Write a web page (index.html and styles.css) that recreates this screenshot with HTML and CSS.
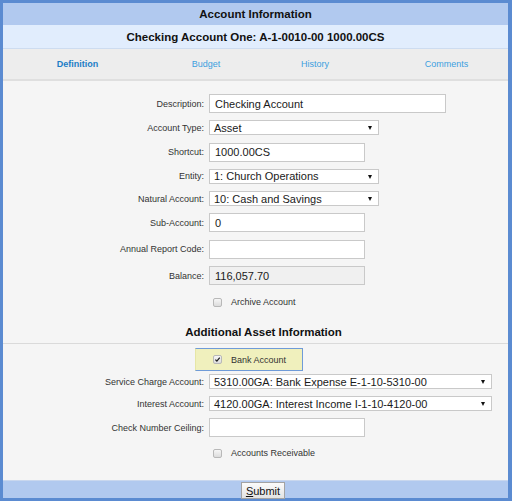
FILE: index.html
```html
<!DOCTYPE html>
<html>
<head>
<meta charset="utf-8">
<title>Account Information</title>
<link rel="stylesheet" href="styles.css">
</head>
<body>
<div class="frame">
  <div class="title">Account Information</div>
  <div class="subtitle">Checking Account One: A-1-0010-00 1000.00CS</div>
  <nav class="tabs">
    <a class="tab tab-1 active">Definition</a>
    <a class="tab tab-2">Budget</a>
    <a class="tab tab-3">History</a>
    <a class="tab tab-4">Comments</a>
  </nav>
  <div class="content">
    <div class="form form-main">
      <label class="lbl">Description:</label>
      <div class="field w-lg">Checking Account</div>

      <label class="lbl">Account Type:</label>
      <div class="select w-md">Asset</div>

      <label class="lbl">Shortcut:</label>
      <div class="field w-sm">1000.00CS</div>

      <label class="lbl">Entity:</label>
      <div class="select w-md">1: Church Operations</div>

      <label class="lbl">Natural Account:</label>
      <div class="select w-md">10: Cash and Savings</div>

      <label class="lbl">Sub-Account:</label>
      <div class="field w-sm">0</div>

      <label class="lbl">Annual Report Code:</label>
      <div class="field w-sm"></div>

      <label class="lbl">Balance:</label>
      <div class="field w-sm readonly">116,057.70</div>

      <div class="check-row check-row-tall">
        <span class="cb"></span><span class="cb-label">Archive Account</span>
      </div>
    </div>

    <h2 class="section-title">Additional Asset Information</h2>

    <div class="bank-box">
      <span class="cb checked"><svg viewBox="0 0 9 9" width="9" height="9"><path d="M1.8 4.6 L3.7 6.6 L7.4 2" fill="none" stroke="#1e1e1e" stroke-width="1.6"/></svg></span><span class="cb-label">Bank Account</span>
    </div>

    <div class="form form-asset">
      <label class="lbl">Service Charge Account:</label>
      <div class="select w-xl">5310.00GA: Bank Expense E-1-10-5310-00</div>

      <label class="lbl">Interest Account:</label>
      <div class="select w-xl">4120.00GA: Interest Income I-1-10-4120-00</div>

      <label class="lbl">Check Number Ceiling:</label>
      <div class="field w-sm"></div>

      <div class="check-row">
        <span class="cb"></span><span class="cb-label">Accounts Receivable</span>
      </div>
    </div>
  </div>
  <div class="footer">
    <button class="submit" type="button"><u>S</u>ubmit</button>
  </div>
</div>
</body>
</html>
```

FILE: styles.css
```css
* { box-sizing: border-box; }
html, body { margin: 0; padding: 0; }
body {
  font-family: "Liberation Sans", Arial, sans-serif;
  background: #ffffff;
}
.frame {
  width: 512px;
  height: 501px;
  border: 3px solid #5b8bd1;
  border-right-width: 4px;
  display: flex;
  flex-direction: column;
  background: #f5f5f5;
}
.title {
  height: 22px;
  flex: none;
  background: #b1c9ef;
  color: #111;
  font-weight: bold;
  font-size: 11.5px;
  display: flex;
  align-items: center;
  justify-content: center;
}
.subtitle {
  height: 24px;
  flex: none;
  background: #e1edfd;
  border-bottom: 1px solid #cddcf0;
  color: #111;
  font-weight: bold;
  font-size: 11.5px;
  display: flex;
  align-items: center;
  justify-content: center;
}
.tabs {
  height: 32px;
  flex: none;
  background: #ededed;
  border-bottom: 2px solid #dfdfdf;
  display: grid;
  grid-template-columns: 149px 108px 110px 1fr;
  align-items: center;
  font-size: 9px;
}
.tab {
  text-align: center;
  color: #3c9fdf;
  cursor: pointer;
}
.tab.active { color: #1b7dc6; font-weight: bold; }
.tab-4 { padding-left: 15px; }

.content {
  flex: 1;
  padding-top: 13px;
}
.form {
  display: grid;
  grid-template-columns: 201px 1fr;
  column-gap: 5px;
  align-items: center;
}
.form-main { row-gap: 7.3px; }
.form-asset { row-gap: 7px; margin-top: 3px; }
.lbl {
  font-size: 9px;
  color: #333;
  text-align: right;
}
.field, .select {
  background: #fff;
  border: 1px solid #c9c9c9;
  font-size: 11px;
  color: #1a1a1a;
  display: flex;
  align-items: center;
  white-space: nowrap;
}
.field { height: 19px; padding-left: 5px; }
.field.readonly { background: #f0f0f0; }
.select {
  height: 15px;
  padding-left: 4px;
  position: relative;
}
.select::after {
  content: "";
  position: absolute;
  right: 6px;
  top: 5px;
  border-left: 2.5px solid transparent;
  border-right: 2.5px solid transparent;
  border-top: 4px solid #111;
}
.w-lg { width: 237px; }
.w-md { width: 170px; }
.w-sm { width: 156px; }
.w-xl { width: 283px; }

.check-row {
  grid-column: 2;
  height: 18px;
  display: flex;
  align-items: center;
  padding-left: 4px;
}
.check-row-tall { height: 20px; }
.cb {
  width: 9px;
  height: 9px;
  border: 1px solid #b8b8b8;
  border-radius: 2px;
  background: linear-gradient(#f6f6f6, #dcdcdc);
  display: inline-flex;
  align-items: center;
  justify-content: center;
  flex: none;
}
.cb svg { display: block; }
.cb-label {
  font-size: 9px;
  color: #333;
  margin-left: 9px;
}

.section-title {
  margin: 0;
  padding: 12px 0 3px 16px;
  line-height: 16px;
  font-size: 11.5px;
  font-weight: bold;
  color: #111;
  text-align: center;
  border-bottom: 1px solid #dadada;
}

.bank-box {
  margin-top: 4px;
  margin-left: 192px;
  width: 108px;
  height: 23px;
  background: #f0f0bd;
  border: 1px solid #6f9bd8;
  border-left-color: #e6e6a6;
  display: flex;
  align-items: center;
  padding-left: 17px;
}

.footer {
  height: 18px;
  flex: none;
  background: #b1c9ef;
  border-top: 1px solid #c9d7ee;
  display: flex;
  justify-content: center;
  align-items: flex-start;
  padding-top: 1px;
  padding-left: 15px;
}
.submit {
  width: 44px;
  height: 17px;
  margin: 0;
  padding: 0;
  border: 1px solid #a3a3a3;
  background: linear-gradient(#fbfbfb, #e3e3e3);
  font-family: "Liberation Sans", Arial, sans-serif;
  font-size: 11px;
  color: #111;
  line-height: 14px;
}
```
